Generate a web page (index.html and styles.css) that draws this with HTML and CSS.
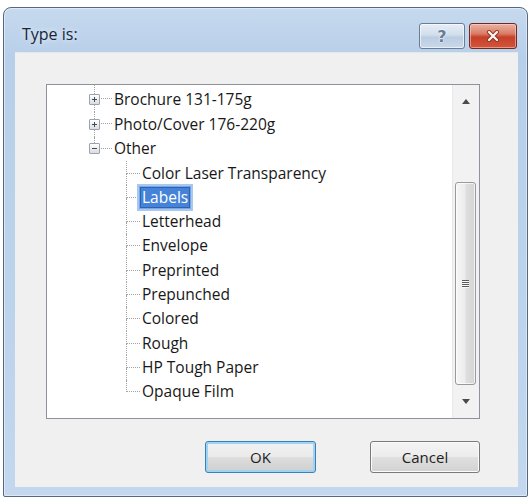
FILE: index.html
```html
<!DOCTYPE html>
<html>
<head>
<meta charset="utf-8">
<link rel="stylesheet" href="styles.css">
</head>
<body>
<div class="window">
  <div class="titlebar">
    <span class="title">Type is:</span>
    <div class="caption-btns">
      <div class="cbtn help">?</div>
      <div class="cbtn close">
        <svg width="14" height="12" viewBox="0 0 14 12"><path d="M3 2 L11 10 M11 2 L3 10" stroke="#8a3022" stroke-width="4" stroke-linecap="round"/><path d="M3 2 L11 10 M11 2 L3 10" stroke="#fff4f0" stroke-width="2.4" stroke-linecap="round"/></svg>
      </div>
    </div>
  </div>
  <div class="client">
    <div class="tree">
      <div class="tree-list">
        <div class="row root first">
          <div class="exp"><div class="seg up"></div><div class="box plus"></div><div class="seg down"></div></div>
          <div class="hconn"></div>
          <span class="lbl">Brochure 131-175g</span>
        </div>
        <div class="row root">
          <div class="exp"><div class="seg up"></div><div class="box plus"></div><div class="seg down"></div></div>
          <div class="hconn"></div>
          <span class="lbl">Photo/Cover 176-220g</span>
        </div>
        <div class="row root">
          <div class="exp"><div class="seg up"></div><div class="box minus"></div><div class="seg"></div></div>
          <div class="hconn"></div>
          <span class="lbl">Other</span>
        </div>
        <div class="row child"><div class="branch"><div class="bt"></div><div class="bb"></div></div><span class="lbl">Color Laser Transparency</span></div>
        <div class="row child"><div class="branch"><div class="bt"></div><div class="bb"></div></div><span class="lbl selected">Labels</span></div>
        <div class="row child"><div class="branch"><div class="bt"></div><div class="bb"></div></div><span class="lbl">Letterhead</span></div>
        <div class="row child"><div class="branch"><div class="bt"></div><div class="bb"></div></div><span class="lbl">Envelope</span></div>
        <div class="row child"><div class="branch"><div class="bt"></div><div class="bb"></div></div><span class="lbl">Preprinted</span></div>
        <div class="row child"><div class="branch"><div class="bt"></div><div class="bb"></div></div><span class="lbl">Prepunched</span></div>
        <div class="row child"><div class="branch"><div class="bt"></div><div class="bb"></div></div><span class="lbl">Colored</span></div>
        <div class="row child"><div class="branch"><div class="bt"></div><div class="bb"></div></div><span class="lbl">Rough</span></div>
        <div class="row child"><div class="branch"><div class="bt"></div><div class="bb"></div></div><span class="lbl">HP Tough Paper</span></div>
        <div class="row child"><div class="branch last"><div class="bt"></div><div class="bb"></div></div><span class="lbl">Opaque Film</span></div>
      </div>
      <div class="vscroll">
        <div class="arrow"><svg width="8" height="5" viewBox="0 0 8 5"><path d="M0 5 L4 0 L8 5 Z" fill="#4a4a4a"/></svg></div>
        <div class="track"><div class="thumb"><div class="grip"></div></div></div>
        <div class="arrow"><svg width="8" height="5" viewBox="0 0 8 5"><path d="M0 0 L8 0 L4 5 Z" fill="#4a4a4a"/></svg></div>
      </div>
    </div>
    <div class="actions">
      <button class="btn default">OK</button>
      <button class="btn cancel">Cancel</button>
    </div>
  </div>
</div>
</body>
</html>
```

FILE: styles.css
```css
html, body {
  margin: 0;
  padding: 0;
  background: #ffffff;
}
body {
  font-family: "Open Sans", "Noto Sans", "DejaVu Sans", sans-serif;
  width: 531px;
  height: 498px;
  overflow: hidden;
}
.window {
  margin: 7px 3px 0 3px;
  width: 523px;
  height: 488px;
  border: 1px solid #55687f;
  border-radius: 8px 8px 2px 2px;
  background: linear-gradient(180deg, #c6d9ee 0%, #b8cfe9 10%, #bcd3ec 60%, #c3d8ee 100%);
  display: flex;
  flex-direction: column;
  box-shadow: inset 0 0 0 1px rgba(255,255,255,0.45);
}
.titlebar {
  height: 44px;
  display: flex;
  justify-content: space-between;
  align-items: flex-start;
  padding: 0 10px 0 18px;
}
.title {
  margin-top: 15px;
  font-size: 16px;
  color: #16263b;
  text-shadow: 0 0 6px rgba(255,255,255,0.9);
}
.caption-btns {
  margin-top: 15px;
  display: flex;
  gap: 4px;
}
.cbtn {
  height: 24px;
  border-radius: 3px;
  display: flex;
  align-items: center;
  justify-content: center;
}
.help {
  width: 44px;
  border: 1px solid #6b7d95;
  background: linear-gradient(180deg, #e6eef8 0%, #d2deec 45%, #bccde2 55%, #c9d8ea 100%);
  color: #6a7d96;
  font-weight: bold;
  font-size: 16px;
  font-family: "DejaVu Sans", sans-serif;
  text-shadow: 0 0 2px #ffffff, 0 0 1px #ffffff;
  box-shadow: inset 0 0 0 1px rgba(255,255,255,0.6);
}
.close {
  width: 46px;
  border: 1px solid #6f2a22;
  background: linear-gradient(180deg, #eab2a4 0%, #db7d66 40%, #c6402a 55%, #d2553a 100%);
  box-shadow: inset 0 0 0 1px rgba(255,220,210,0.5);
}
.client {
  flex: 1;
  margin: 0 9px 9px 11px;
  background: #f0f0f0;
  padding: 31px 38px 0 31px;
  border-top: 1px solid #dfe7f0;
}
.tree {
  height: 333px;
  border: 1px solid #8e939b;
  background: #ffffff;
  display: flex;
}
.tree-list {
  flex: 1;
}
.row {
  height: 24.3px;
  display: flex;
  align-items: center;
  font-size: 15.5px;
  color: #181818;
}
.row.first {
  height: 27.3px;
  align-items: flex-end;
}
.row.first .exp {
  height: 100%;
}
.row.first .seg.down {
  flex: 0 0 7px;
}
.row.first .lbl {
  margin-bottom: 2px;
}
.row.first .hconn {
  margin-bottom: 12px;
}
.row.root {
  padding-left: 42px;
}
.row.child {
  padding-left: 79px;
}
.exp {
  width: 11px;
  height: 100%;
  display: flex;
  flex-direction: column;
}
.seg {
  flex: 1;
  margin-left: 5px;
}
.seg.up, .seg.down {
  border-left: 1px dotted #a3a3a3;
}
.box {
  width: 9px;
  height: 9px;
  flex: 0 0 9px;
  border: 1px solid #99a3b3;
  border-radius: 1px;
  background: linear-gradient(180deg, #ffffff, #dcdcdc);
  position: relative;
}
.box::before {
  content: "";
  position: absolute;
  left: 2px;
  top: 4px;
  width: 5px;
  height: 1px;
  background: #3b4a5e;
}
.box.plus::after {
  content: "";
  position: absolute;
  left: 4px;
  top: 2px;
  width: 1px;
  height: 5px;
  background: #3b4a5e;
}
.hconn {
  width: 11px;
  height: 1px;
  border-top: 1px dotted #a3a3a3;
  margin-left: 1px;
}
.branch {
  width: 14px;
  height: 100%;
  display: flex;
  flex-direction: column;
}
.bt {
  flex: 1;
  border-left: 1px dotted #a3a3a3;
  border-bottom: 1px dotted #a3a3a3;
}
.bb {
  flex: 1;
  border-left: 1px dotted #a3a3a3;
}
.branch.last .bb {
  border-left: none;
}
.lbl {
  padding: 0 2px;
  line-height: 21px;
  white-space: nowrap;
}
.lbl.selected {
  background: #4583d9;
  color: #ffffff;
  box-shadow: inset 0 0 0 1px #2d62b5, 0 0 0 1px #7aa6e3, 0 0 0 3px #a9c8ef;
}
.vscroll {
  width: 26px;
  background: #f2f2f2;
  border-left: 1px solid #e8e8e8;
  display: flex;
  flex-direction: column;
}
.arrow {
  height: 33px;
  display: flex;
  align-items: center;
  justify-content: center;
}
.track {
  flex: 1;
  display: flex;
  flex-direction: column;
  padding: 64px 3px 0 2px;
}
.thumb {
  flex: 1;
  border: 1px solid #9a9a9a;
  border-radius: 3px;
  background: linear-gradient(90deg, #f6f6f6 0%, #ececec 45%, #dedede 55%, #d4d4d4 100%);
  display: flex;
  align-items: center;
  justify-content: center;
  box-shadow: inset 0 0 0 1px rgba(255,255,255,0.7);
}
.grip {
  width: 7px;
  height: 8px;
  background: repeating-linear-gradient(180deg, #5a5a5a 0px, #5a5a5a 1px, #f8f8f8 1px, #f8f8f8 2px);
}
.actions {
  margin-top: 22px;
  display: flex;
  justify-content: flex-end;
  gap: 54px;
}
.btn {
  height: 32px;
  font-family: "Open Sans", "Noto Sans", "DejaVu Sans", sans-serif;
  font-size: 15px;
  color: #1e1e1e;
  border-radius: 3px;
  padding: 0;
}
.btn.default {
  width: 111px;
  border: 1px solid #3c7fb1;
  background: linear-gradient(180deg, #f2f2f2 0%, #ebebeb 48%, #dddddd 52%, #cfcfcf 100%);
  box-shadow: inset 0 0 0 2px #9fd3f5;
}
.btn.cancel {
  width: 110px;
  border: 1px solid #7a7a7a;
  background: linear-gradient(180deg, #f4f4f4 0%, #ececec 48%, #dfdfdf 52%, #d2d2d2 100%);
  box-shadow: inset 0 0 0 1px #fbfbfb;
}
```
